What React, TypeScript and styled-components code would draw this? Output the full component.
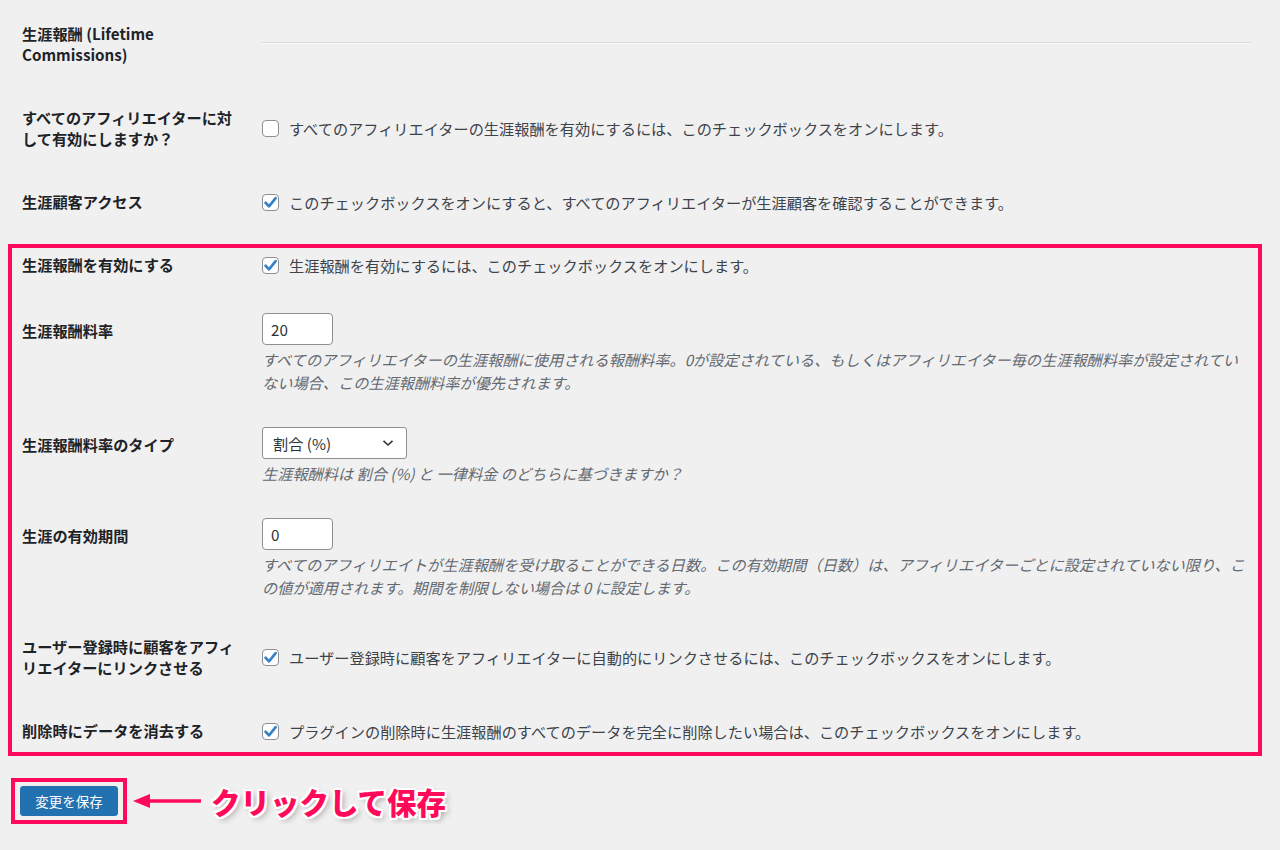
import styled, { createGlobalStyle } from "styled-components";

const GlobalStyle = createGlobalStyle`
  html, body {
    margin: 0;
    background: #f0f0f1;
  }

  body {
    font-family: "Noto Sans CJK JP", "Noto Sans", sans-serif;
    font-size: 15.2px;
    color: #1d2327;
  }
`;

const FormTable = styled.div`
  padding: 0 28px 0 22px;
`;

const Row = styled.div`
  display: grid;
  grid-template-columns: 240px 1fr;
  align-items: center;
`;

const Label = styled.div<{ $top?: number }>`
  align-self: start;
  width: 218px;
  padding: ${({ $top }) => $top ?? 21}px 0 21px;

  font-weight: 600;
  line-height: 21px;
`;

const Field = styled.div`
  padding: 17px 0 16px;
  line-height: 21px;
`;

const Rule = styled.hr`
  align-self: start;
  margin: 42px 0 0;
  border: 0;
  border-top: 1px solid #dcdcde;
  border-bottom: 1px solid #fafafa;
`;

const CheckLine = styled.div`
  display: flex;
  align-items: center;
  gap: 10px;

  color: #3c434a;
`;

const Box = styled.span`
  width: 17px;
  height: 17px;
  flex: none;
  box-sizing: border-box;
  display: flex;
  align-items: center;
  justify-content: center;

  border: 1px solid #8c8f94;
  border-radius: 4px;
  background-color: #fff;
`;

const TextInput = styled.div`
  width: 71px;
  height: 32px;
  box-sizing: border-box;
  padding: 0 8px;
  display: flex;
  align-items: center;

  border: 1px solid #8c8f94;
  border-radius: 4px;
  background-color: #fff;
  color: #2c3338;
`;

const Select = styled.div`
  width: 145px;
  height: 32px;
  box-sizing: border-box;
  padding: 0 12px 0 10px;
  display: flex;
  align-items: center;
  justify-content: space-between;

  border: 1px solid #8c8f94;
  border-radius: 3px;
  background-color: #fff;
  color: #2c3338;
`;

const Description = styled.p`
  margin: 3px 0 0;

  color: #646970;
  font-style: italic;
  line-height: 23px;
`;

const Highlight = styled.div`
  position: relative;

  &::after {
    content: "";
    position: absolute;
    top: 11px;
    bottom: 6px;
    left: -14px;
    right: -10px;
    border: 4px solid #ff0a5a;
    pointer-events: none;
  }
`;

const SubmitBar = styled.div`
  padding: 16px 0 0 11px;
  display: flex;
  align-items: center;
`;

const ButtonFrame = styled.div`
  padding: 4px 5px;
  border: 4px solid #ff0a5a;
`;

const SaveButton = styled.button`
  width: 98px;
  height: 30px;
  padding: 0;

  border: 1px solid #2271b1;
  border-radius: 3px;
  background-color: #2271b1;
  color: #fff;
  font-family: inherit;
  font-size: 13.5px;
`;

const Arrow = styled.svg`
  margin-left: 6px;
  flex: none;
`;

const Callout = styled.span`
  margin-left: 8px;

  color: #ff0a5a;
  font-size: 29.5px;
  font-weight: 900;
  line-height: 40px;
  text-shadow:
    2px 0 0 #fff, -2px 0 0 #fff, 0 2px 0 #fff, 0 -2px 0 #fff,
    2px 2px 0 #fff, -2px -2px 0 #fff, 2px -2px 0 #fff, -2px 2px 0 #fff,
    3px 3px 6px rgba(0, 0, 0, 0.35);
`;

type CheckboxProps = {
  checked?: boolean;
  text: string;
};

function Checkbox(props: CheckboxProps) {
  const { checked, text } = props;

  return (
    <CheckLine>
      <Box>
        {checked && (
          <svg width="15" height="15" viewBox="0 0 14 14">
            <path
              d="M2.4 7.2 L5.6 10.6 L11.8 3"
              fill="none"
              stroke="#3582c4"
              strokeWidth="2.5"
              strokeLinecap="round"
              strokeLinejoin="round"
            />
          </svg>
        )}
      </Box>
      <span>{text}</span>
    </CheckLine>
  );
}

function App() {
  return (
    <>
      <GlobalStyle />
      <FormTable>
        <Row>
          <Label $top={23}>生涯報酬 (Lifetime Commissions)</Label>
          <Rule />
        </Row>

        <Row>
          <Label>すべてのアフィリエイターに対して有効にしますか？</Label>
          <Field>
            <Checkbox text="すべてのアフィリエイターの生涯報酬を有効にするには、このチェックボックスをオンにします。" />
          </Field>
        </Row>

        <Row>
          <Label>生涯顧客アクセス</Label>
          <Field>
            <Checkbox checked text="このチェックボックスをオンにすると、すべてのアフィリエイターが生涯顧客を確認することができます。" />
          </Field>
        </Row>

        <Highlight>
          <Row>
            <Label>生涯報酬を有効にする</Label>
            <Field>
              <Checkbox checked text="生涯報酬を有効にするには、このチェックボックスをオンにします。" />
            </Field>
          </Row>

          <Row>
            <Label $top={24}>生涯報酬料率</Label>
            <Field>
              <TextInput>20</TextInput>
              <Description>
                すべてのアフィリエイターの生涯報酬に使用される報酬料率。0が設定されている、もしくはアフィリエイター毎の生涯報酬料率が設定されていない場合、この生涯報酬料率が優先されます。
              </Description>
            </Field>
          </Row>

          <Row>
            <Label $top={24}>生涯報酬料率のタイプ</Label>
            <Field>
              <Select>
                <span>割合 (%)</span>
                <svg width="12" height="8" viewBox="0 0 12 8">
                  <path
                    d="M1.5 1.8 L6 6 L10.5 1.8"
                    fill="none"
                    stroke="#2c3338"
                    strokeWidth="1.6"
                  />
                </svg>
              </Select>
              <Description>生涯報酬料は 割合 (%) と 一律料金 のどちらに基づきますか？</Description>
            </Field>
          </Row>

          <Row>
            <Label $top={24}>生涯の有効期間</Label>
            <Field>
              <TextInput>0</TextInput>
              <Description>
                すべてのアフィリエイトが生涯報酬を受け取ることができる日数。この有効期間（日数）は、アフィリエイターごとに設定されていない限り、この値が適用されます。期間を制限しない場合は 0 に設定します。
              </Description>
            </Field>
          </Row>

          <Row>
            <Label>ユーザー登録時に顧客をアフィリエイターにリンクさせる</Label>
            <Field>
              <Checkbox checked text="ユーザー登録時に顧客をアフィリエイターに自動的にリンクさせるには、このチェックボックスをオンにします。" />
            </Field>
          </Row>

          <Row>
            <Label>削除時にデータを消去する</Label>
            <Field>
              <Checkbox checked text="プラグインの削除時に生涯報酬のすべてのデータを完全に削除したい場合は、このチェックボックスをオンにします。" />
            </Field>
          </Row>
        </Highlight>
      </FormTable>

      <SubmitBar>
        <ButtonFrame>
          <SaveButton type="button">変更を保存</SaveButton>
        </ButtonFrame>
        <Arrow width="70" height="20" viewBox="0 0 70 20">
          <path d="M14 10 H68" stroke="#ff0a5a" strokeWidth="3.5" />
          <polygon points="0,10 17,3 17,17" fill="#ff0a5a" />
        </Arrow>
        <Callout>クリックして保存</Callout>
      </SubmitBar>
    </>
  );
}

export default App;
